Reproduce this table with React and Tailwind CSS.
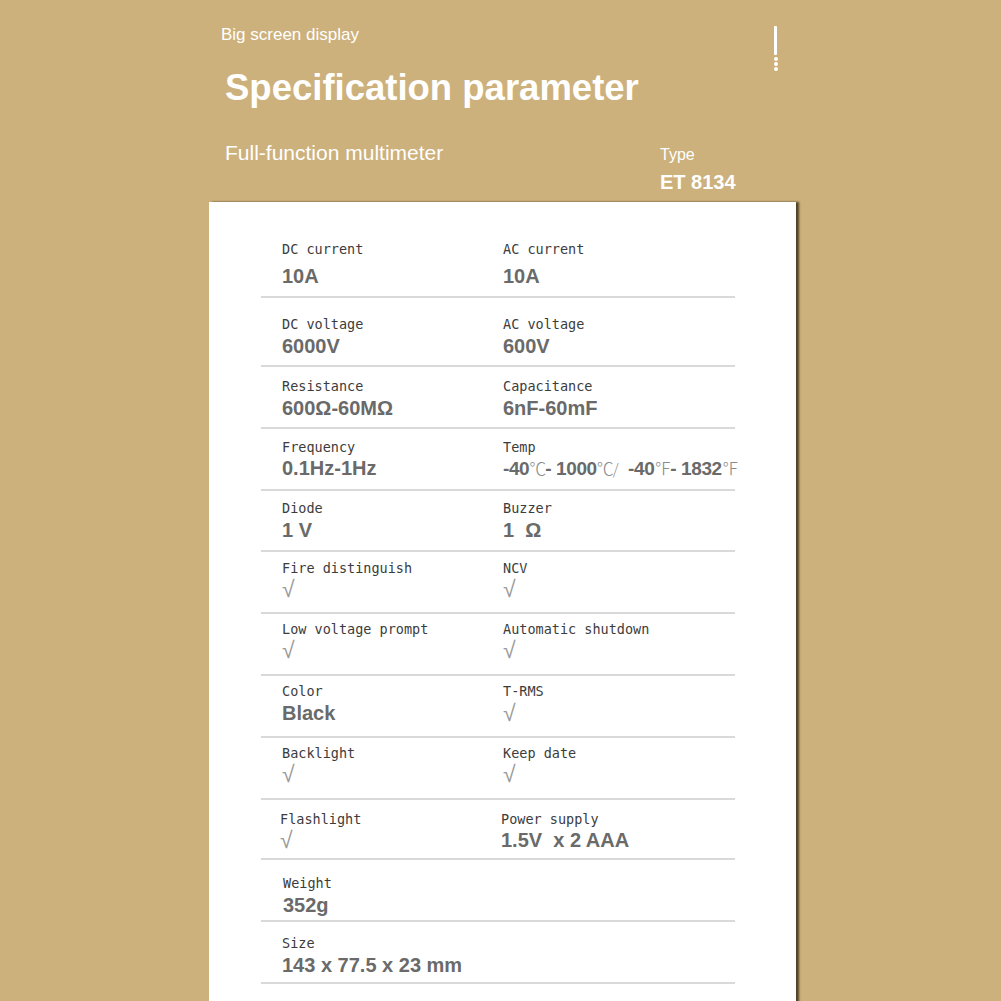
import React from "react";

const LABEL = "font-['DejaVu_Sans_Mono',monospace] text-[13.5px] leading-[16px] text-[#3c3c3c] whitespace-nowrap";
const VALUE = "font-['Liberation_Sans',Arial,sans-serif] font-bold text-[20px] leading-[24px] text-[#6a6a6a] whitespace-nowrap";
const CHECK = "font-['Liberation_Sans',Arial,sans-serif] font-normal text-[23px] leading-[24px] text-[#9a9a9a]";

function Check() {
  return <div className={CHECK}>√</div>;
}

function Sym({ c }) {
  return (
    <span className="font-['Noto_Sans_CJK_SC',sans-serif] font-light text-[17px] text-[#8a8a8a] tracking-[-1px]">{c}</span>
  );
}

function TempValue() {
  return (
    <div className={"font-['Liberation_Sans',Arial,sans-serif] font-bold text-[19px] leading-[24px] text-[#6a6a6a] whitespace-nowrap tracking-[-0.4px]"}>
      -40<Sym c="℃" />- 1000<Sym c="℃" /><span className="font-['Noto_Sans_CJK_SC',sans-serif] font-light text-[15px] text-[#8a8a8a]">/</span>
      {"\u00a0\u00a0"}-40<Sym c="℉" />- 1832<Sym c="℉" />
    </div>
  );
}

function Cell({ label, value, mt }) {
  return (
    <div className="flex flex-col">
      <div className={LABEL}>{label}</div>
      <div style={{ marginTop: mt }}>
        {value === "check" ? <Check /> : typeof value === "string" ? <div className={VALUE}>{value}</div> : value}
      </div>
    </div>
  );
}

const rows = [
  { h: 96, pt: 39, mt: 7, a: ["DC current", "10A"], b: ["AC current", "10A"] },
  { h: 69, pt: 18, mt: 2, a: ["DC voltage", "6000V"], b: ["AC voltage", "600V"] },
  { h: 62, pt: 11, mt: 2, a: ["Resistance", "600Ω-60MΩ"], b: ["Capacitance", "6nF-60mF"] },
  { h: 62, pt: 10, mt: 1, a: ["Frequency", "0.1Hz-1Hz"], b: ["Temp", <TempValue />] },
  { h: 61, pt: 9, mt: 2, a: ["Diode", "1 V"], b: ["Buzzer", "1\u00a0\u00a0Ω"] },
  { h: 62, pt: 8, mt: 1, a: ["Fire distinguish", "check"], b: ["NCV", "check"] },
  { h: 62, pt: 7, mt: 1, a: ["Low voltage prompt", "check"], b: ["Automatic shutdown", "check"] },
  { h: 62, pt: 7, mt: 2, a: ["Color", "Black"], b: ["T-RMS", "check"] },
  { h: 62, pt: 7, mt: 1, a: ["Backlight", "check"], b: ["Keep date", "check"] },
  { h: 60, pt: 11, mt: 1, a: ["Flashlight", "check"], b: ["Power supply", "1.5V\u00a0\u00a0x 2 AAA"], shift: -2 },
  { h: 62, pt: 15, mt: 2, a: ["Weight", "352g"], shift: 1 },
  { h: 62, pt: 13, mt: 2, a: ["Size", "143 x 77.5 x 23 mm"] },
];

function BarIcon() {
  return (
    <div className="flex flex-col items-center w-[5px] mt-[1px] shrink-0">
      <div className="w-[3px] h-[29px] bg-white rounded-[1px] shrink-0" />
      <div className="w-[4px] h-[4px] rounded-full bg-white mt-[2px] shrink-0" />
      <div className="w-[4px] h-[4px] rounded-full bg-white mt-[1px] shrink-0" />
      <div className="w-[4px] h-[4px] rounded-full bg-white mt-[1px] shrink-0" />
    </div>
  );
}

export default function App() {
  return (
    <div className="w-[1001px] h-[1001px] bg-[#cdb17c] overflow-hidden">
      <div className="ml-[209px] w-[588px]">
        <header className="h-[202px] flex flex-col text-white font-['Liberation_Sans',Arial,sans-serif]">
          <div className="flex justify-between items-start h-[45px] pt-[25px] pl-[12px] pr-[19px]">
            <div className="text-[17px] leading-[20px]">Big screen display</div>
            <BarIcon />
          </div>
          <div className="mt-[21px] pl-[16px] text-[36.5px] leading-[44px] font-bold">Specification parameter</div>
          <div className="flex mt-[30px]">
            <div className="w-[451px] pl-[16px] text-[21px] leading-[26px]">Full-function multimeter</div>
            <div className="flex flex-col pt-[5px]">
              <div className="text-[16px] leading-[20px]">Type</div>
              <div className="mt-[5px] text-[20px] leading-[24px] font-bold">ET 8134</div>
            </div>
          </div>
        </header>
        <div className="w-[587px] h-[820px] bg-white shadow-[3px_0_2px_rgba(40,30,10,0.75)] pl-[52px] pr-[61px]">
          {rows.map((r, i) => (
            <div
              key={i}
              className="border-b-2 border-[#d9d9d9] grid grid-cols-[242px_1fr]"
              style={{ height: r.h, paddingTop: r.pt }}
            >
              <div className="pl-[21px]" style={{ marginLeft: r.shift || 0 }}>
                <Cell label={r.a[0]} value={r.a[1]} mt={r.mt} />
              </div>
              <div style={{ marginLeft: r.shift && r.shift < 0 ? r.shift : 0 }}>
                {r.b && <Cell label={r.b[0]} value={r.b[1]} mt={r.mt} />}
              </div>
            </div>
          ))}
        </div>
      </div>
    </div>
  );
}
